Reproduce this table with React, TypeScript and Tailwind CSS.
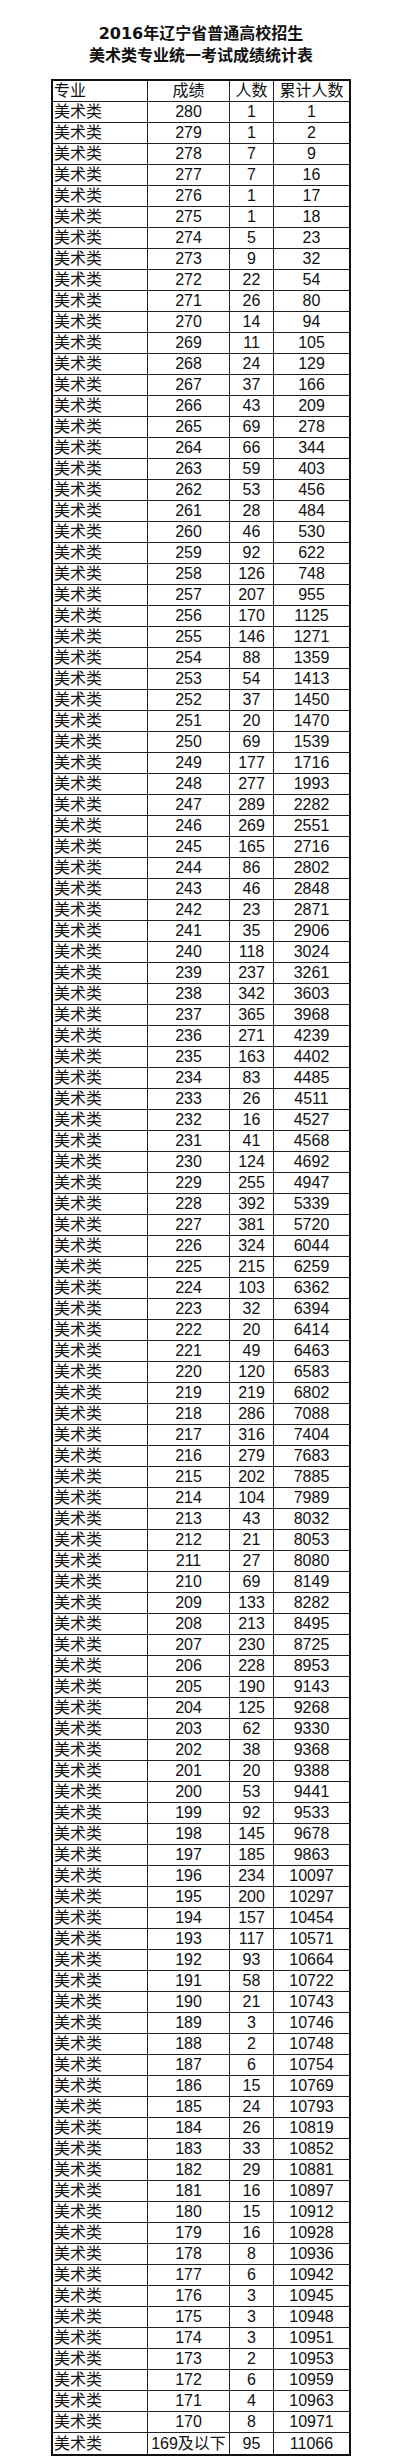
import React from 'react';

// [成绩, 人数]; 累计人数 is summed below
const rows: [string, number][] = [
    ['280', 1], ['279', 1], ['278', 7], ['277', 7], ['276', 1], ['275', 1], ['274', 5], ['273', 9],
    ['272', 22], ['271', 26], ['270', 14], ['269', 11], ['268', 24], ['267', 37], ['266', 43], ['265', 69],
    ['264', 66], ['263', 59], ['262', 53], ['261', 28], ['260', 46], ['259', 92], ['258', 126], ['257', 207],
    ['256', 170], ['255', 146], ['254', 88], ['253', 54], ['252', 37], ['251', 20], ['250', 69], ['249', 177],
    ['248', 277], ['247', 289], ['246', 269], ['245', 165], ['244', 86], ['243', 46], ['242', 23], ['241', 35],
    ['240', 118], ['239', 237], ['238', 342], ['237', 365], ['236', 271], ['235', 163], ['234', 83], ['233', 26],
    ['232', 16], ['231', 41], ['230', 124], ['229', 255], ['228', 392], ['227', 381], ['226', 324], ['225', 215],
    ['224', 103], ['223', 32], ['222', 20], ['221', 49], ['220', 120], ['219', 219], ['218', 286], ['217', 316],
    ['216', 279], ['215', 202], ['214', 104], ['213', 43], ['212', 21], ['211', 27], ['210', 69], ['209', 133],
    ['208', 213], ['207', 230], ['206', 228], ['205', 190], ['204', 125], ['203', 62], ['202', 38], ['201', 20],
    ['200', 53], ['199', 92], ['198', 145], ['197', 185], ['196', 234], ['195', 200], ['194', 157], ['193', 117],
    ['192', 93], ['191', 58], ['190', 21], ['189', 3], ['188', 2], ['187', 6], ['186', 15], ['185', 24],
    ['184', 26], ['183', 33], ['182', 29], ['181', 16], ['180', 15], ['179', 16], ['178', 8], ['177', 6],
    ['176', 3], ['175', 3], ['174', 3], ['173', 2], ['172', 6], ['171', 4], ['170', 8], ['169及以下', 95],
];

const cell = 'h-full flex items-center border-r border-[#222]';

export default function App() {
    let total = 0;
    const data = rows.map(([score, count]) => {
        total += count;
        return { score, count, sum: total };
    });

    return (
        <div className="bg-white text-[#111] pt-[23px] pb-[8px] font-['Liberation_Sans','Noto_Sans_CJK_SC',sans-serif]">
            <div className="text-center font-bold text-[16px] leading-[21.5px] font-['DejaVu_Sans','Noto_Sans_CJK_SC',sans-serif]">
                <p>2016年辽宁省普通高校招生</p>
                <p>美术类专业统一考试成绩统计表</p>
            </div>

            <div className="mt-[14px] mx-auto w-[298px] border border-[#111] shadow-[0_0_0_1px_#111] text-[16px] leading-none">
                {/* header */}
                <div className="grid grid-cols-[95px_82px_44px_75px] h-[21px] border-b border-[#222]">
                    <div className={`${cell} pl-[1px]`}>专业</div>
                    <div className={`${cell} justify-center`}>成绩</div>
                    <div className={`${cell} justify-center`}>人数</div>
                    <div className="h-full flex items-center justify-center">累计人数</div>
                </div>

                {data.map((r, i) => (
                    <div
                        key={r.score}
                        className={`grid grid-cols-[95px_82px_44px_75px] h-[21px] ${i < data.length - 1 ? 'border-b border-[#222]' : ''}`}
                    >
                        <div className={`${cell} pl-[1px]`}>美术类</div>
                        <div className={`${cell} justify-center`}>{r.score}</div>
                        <div className={`${cell} justify-center`}>{r.count}</div>
                        <div className="h-full flex items-center justify-center">{r.sum}</div>
                    </div>
                ))}
            </div>
        </div>
    );
}
